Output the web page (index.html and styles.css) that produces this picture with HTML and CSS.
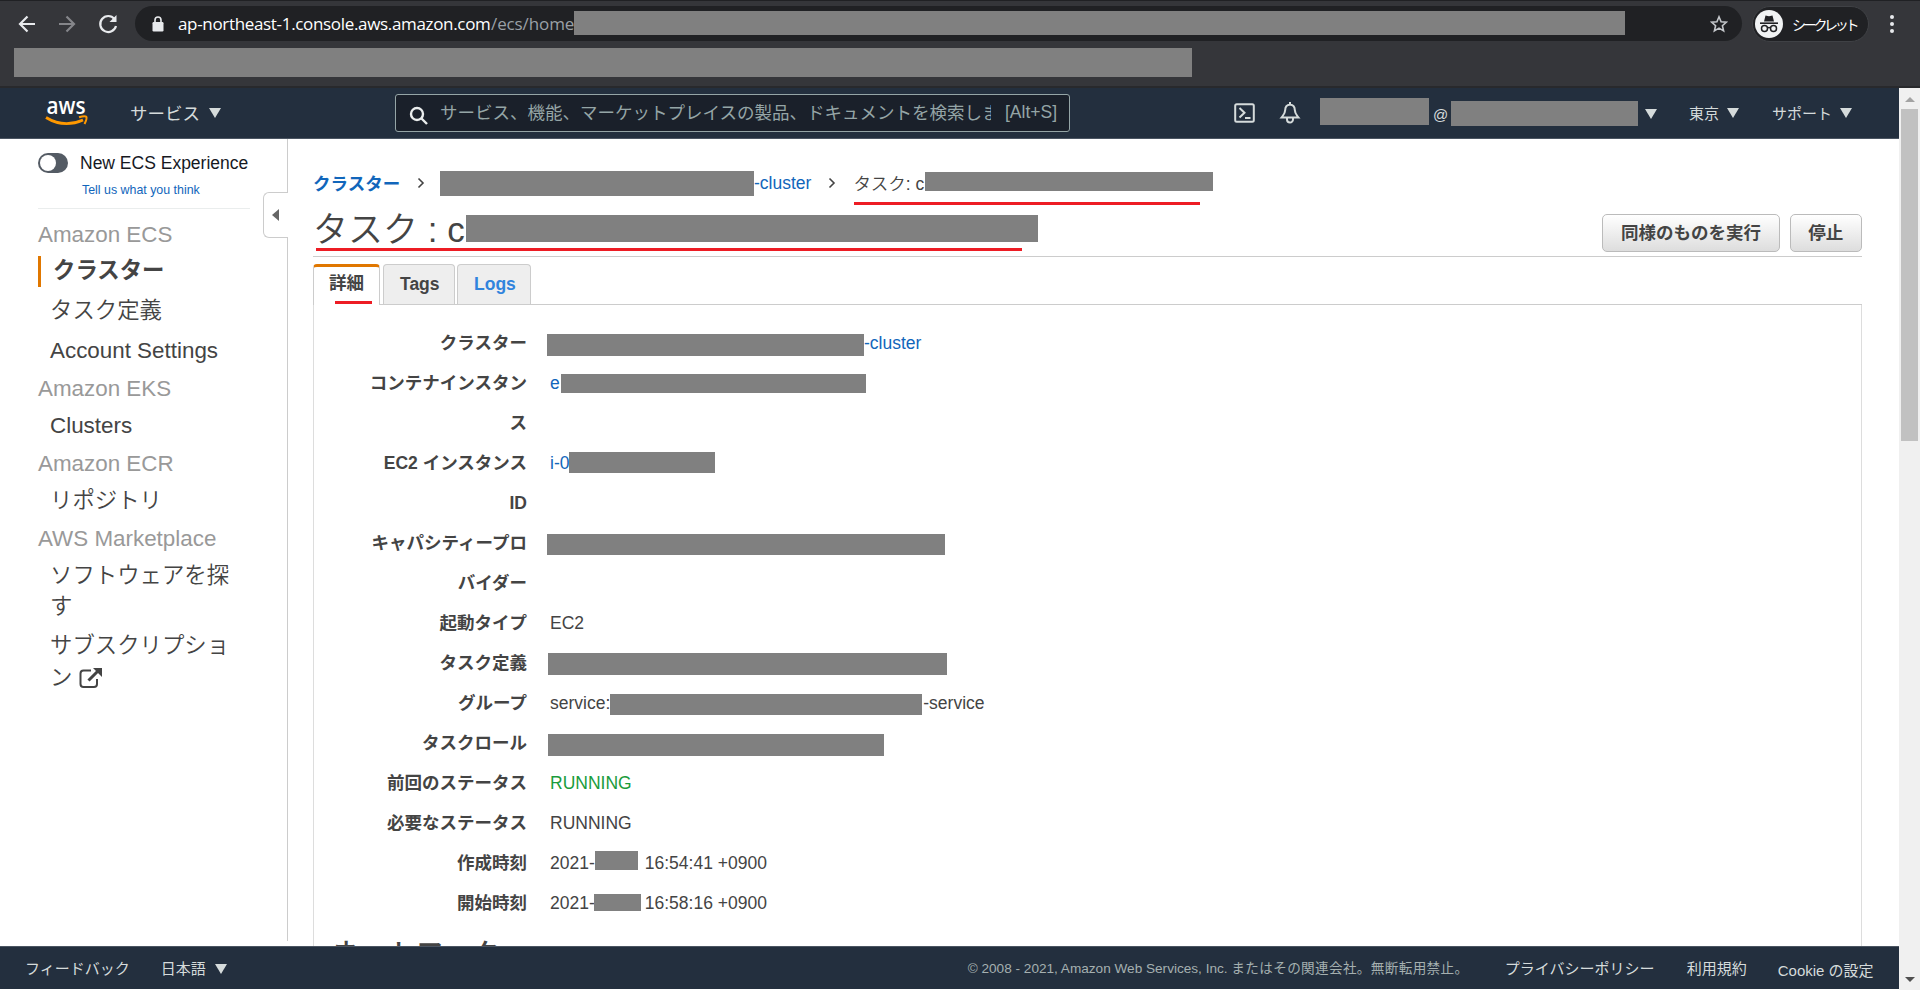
FILE: index.html
```
<!DOCTYPE html>
<html lang="ja">

<head>
    <meta charset="UTF-8">
    <meta name="viewport" content="width=device-width, initial-scale=1.0">
    <title>Amazon ECS</title>
    <link rel="stylesheet" href="styles.css">
</head>

<body>
    <!-- browser bar -->
    <div class="browser">
        <div class="toolbar">
            <svg class="nav-icon" width="18" height="20" viewBox="0 0 18 20"><path d="M17 10H2M9.500 2.500L2 10l7.500 7.500" /></svg>
            <svg class="nav-icon disabled" width="18" height="20" viewBox="0 0 18 20"><path d="M1 10h15M8.500 2.500L16 10l-7.500 7.500" /></svg>
            <svg class="nav-icon" width="20" height="22" viewBox="0 0 20 22"><path d="M16.500 6A8 8 0 1 0 18 13" /><path class="solid" d="M18.500 2v7h-7z" /></svg>
            <div class="omnibox">
                <svg class="lock" width="12" height="16" viewBox="0 0 12 16"><path d="M3 7V4a3 3 0 0 1 6 0v3" fill="none" stroke="#e8eaed" stroke-width="1.600" /><rect x="0.500" y="6" width="11" height="9.500" rx="1.200" fill="#e8eaed" /></svg>
                <span class="url">ap-northeast-1.console.aws.amazon.com</span><span class="url path">/ecs/home</span>
                <span class="mask mask-url"></span>
                <svg class="star" width="18" height="18" viewBox="0 0 18 18"><path d="M9 1.800l2.100 4.900 5.300.5-4 3.500 1.200 5.200L9 13.100l-4.600 2.800 1.200-5.200-4-3.500 5.300-.5z" /></svg>
            </div>
            <div class="incognito">
                <svg width="28" height="28" viewBox="0 0 28 28"><circle cx="14" cy="14" r="14" fill="#f1f3f4" /><path d="M10.500 5.500l3.500.7 3.500-.7 1.500 6H9z" fill="#202124" /><path d="M5 13.200h18" stroke="#202124" stroke-width="1.600" /><g fill="none" stroke="#202124" stroke-width="1.500"><circle cx="9.500" cy="18.500" r="3" /><circle cx="18.500" cy="18.500" r="3" /><path d="M12.500 18q1.500-1 3 0" /></g></svg>
                <span>シークレット</span>
            </div>
            <svg class="menu" width="6" height="20" viewBox="0 0 6 20"><circle cx="3" cy="3" r="2" /><circle cx="3" cy="10" r="2" /><circle cx="3" cy="17" r="2" /></svg>
        </div>
        <div class="bookmarks"><span class="mask mask-bookmarks"></span></div>
    </div>

    <div class="window">
        <div class="page">
            <!-- header -->
            <div class="header">
                <svg class="logo" width="44" height="32" viewBox="0 -2 44 32">
                    <text x="1.500" y="15" textLength="39" lengthAdjust="spacingAndGlyphs">aws</text>
                    <path d="M1 18.500q18 11 37 2.500" fill="none" stroke="#ff9900" stroke-width="2.800" />
                    <path d="M34 18.200q6-1.800 7.300-.4 1 1.800-1.800 7.200" fill="none" stroke="#ff9900" stroke-width="2" />
                </svg>
                <a class="services">サービス<i class="caret"></i></a>
                <div class="search">
                    <svg width="20" height="20" viewBox="0 0 20 20"><circle cx="8" cy="8" r="6" /><path d="M12.500 12.500l5.500 5.500" /></svg>
                    <span class="search-text">サービス、機能、マーケットプレイスの製品、ドキュメントを検索しま</span>
                    <span class="search-key">[Alt+S]</span>
                </div>
                <svg class="shell" width="22" height="20" viewBox="0 0 22 20"><rect x="1.200" y="1.200" width="18.600" height="17.600" rx="1.500" /><path d="M5.500 5l5 4.700-5 4.800M11 15h5.500" /></svg>
                <svg class="bell" width="22" height="22" viewBox="0 0 22 22"><path d="M11 2.500c-3.300.4-4.800 2.600-4.800 5.500 0 3.500-1.700 5-3.700 7.500h17c-2-2.500-3.700-4-3.700-7.500 0-2.900-1.500-5.100-4.800-5.500zM11 0v3M8 16v1.500a3 3 0 0 0 6 0V16" /></svg>
                <div class="account">
                    <span class="mask mask-user"></span><span class="at">@</span><span class="mask mask-account"></span><i class="caret"></i>
                </div>
                <a class="region">東京<i class="caret"></i></a>
                <a class="support">サポート<i class="caret"></i></a>
            </div>

            <div class="body">
                <!-- sidebar -->
                <div class="sidebar">
                    <div class="switch-row"><span class="switch"></span>New ECS Experience</div>
                    <a class="feedback">Tell us what you think</a>
                    <div class="menu-title first">Amazon ECS</div>
                    <a class="menu-item active">クラスター</a>
                    <a class="menu-item task">タスク定義</a>
                    <a class="menu-item">Account Settings</a>
                    <div class="menu-title">Amazon EKS</div>
                    <a class="menu-item">Clusters</a>
                    <div class="menu-title">Amazon ECR</div>
                    <a class="menu-item">リポジトリ</a>
                    <div class="menu-title">AWS Marketplace</div>
                    <a class="menu-item wrap">ソフトウェアを探す</a>
                    <a class="menu-item wrap last">サブスクリプション <svg width="24" height="22" viewBox="0 0 24 22"><path d="M12 3.500H4.500a3 3 0 0 0-3 3v10.500a3 3 0 0 0 3 3h10.500a3 3 0 0 0 3-3V12" fill="none" stroke="#444" stroke-width="2" /><path d="M9.500 13.500L19 4" stroke="#444" stroke-width="3" /><path d="M14 1h9v9z" fill="#444" /></svg></a>
                    <div class="collapse"><i></i></div>
                </div>

                <!-- content -->
                <div class="content">
                    <div class="breadcrumb">
                        <a class="crumb-root">クラスター</a>
                        <svg class="sep" width="8" height="12" viewBox="0 0 8 12"><path d="M1.500 1.500L6 6l-4.500 4.500" /></svg>
                        <span class="mask mask-crumb"></span><a>-cluster</a>
                        <svg class="sep sep-last" width="8" height="12" viewBox="0 0 8 12"><path d="M1.500 1.500L6 6l-4.500 4.500" /></svg>
                        <span class="crumb-task">タスク: c</span><span class="mask mask-task"></span>
                        <i class="redline red-crumb"></i>
                    </div>
                    <div class="title-row">
                        <h1>タスク : c</h1><span class="mask mask-title"></span>
                        <div class="buttons">
                            <button>同様のものを実行</button>
                            <button>停止</button>
                        </div>
                        <i class="redline red-title"></i>
                    </div>
                    <div class="tabs">
                        <a class="tab current">詳細<i class="redline red-tab"></i></a>
                        <a class="tab">Tags</a>
                        <a class="tab logs">Logs</a>
                    </div>
                    <div class="panel">
                        <dl>
                            <dt>クラスター</dt>
                            <dd><span class="mask m-cluster"></span><a>-cluster</a></dd>
                            <dt>コンテナインスタンス</dt>
                            <dd><a>e</a><span class="mask m-container"></span></dd>
                            <dt>EC2 インスタンス<br>ID</dt>
                            <dd><a>i-0</a><span class="mask m-instance"></span></dd>
                            <dt>キャパシティープロバイダー</dt>
                            <dd><span class="mask m-capacity"></span></dd>
                            <dt>起動タイプ</dt>
                            <dd>EC2</dd>
                            <dt>タスク定義</dt>
                            <dd><span class="mask m-taskdef"></span></dd>
                            <dt>グループ</dt>
                            <dd>service:<span class="mask m-group"></span>-service</dd>
                            <dt>タスクロール</dt>
                            <dd><span class="mask m-role"></span></dd>
                            <dt>前回のステータス</dt>
                            <dd class="running">RUNNING</dd>
                            <dt>必要なステータス</dt>
                            <dd>RUNNING</dd>
                            <dt>作成時刻</dt>
                            <dd>2021-<span class="mask m-created"></span>16:54:41 +0900</dd>
                            <dt>開始時刻</dt>
                            <dd>2021-<span class="mask m-started"></span>16:58:16 +0900</dd>
                        </dl>
                        <h2>ネットワーク</h2>
                    </div>
                </div>
            </div>

            <!-- footer -->
            <div class="footer">
                <a>フィードバック</a>
                <a class="lang">日本語<i class="caret"></i></a>
                <span class="copyright">© 2008 - 2021, Amazon Web Services, Inc. <span>またはその関連会社。無断転用禁止。</span></span>
                <a class="privacy">プライバシーポリシー</a>
                <a class="terms">利用規約</a>
                <a class="cookie">Cookie の設定</a>
            </div>
        </div>

        <div class="scrollbar">
            <i class="arrow up"></i>
            <div class="thumb"></div>
            <i class="arrow down"></i>
        </div>
    </div>
</body>

</html>
```
FILE: styles.css
```
* {
    box-sizing: border-box;
}

body {
    margin: 0;
    width: 1920px;
    height: 990px;
    overflow: hidden;
    background: #fff;
    color: #444;
    font-family: "Liberation Sans", "Noto Sans CJK JP", sans-serif;
    font-size: 17.5px;
}

a {
    text-decoration: none;
}

svg {
    display: block;
    flex: none;
}

.mask {
    display: block;
    flex: none;
    background: #808080;
}

.redline {
    position: absolute;
    height: 3px;
    background: #ed1c24;
}

.caret {
    display: inline-block;
    border: 6px solid transparent;
    border-top: 10px solid #d5dbdb;
    border-bottom: 0;
}

/* browser */

.browser {
    height: 88px;
    background: #35363a;
    border-top: 1px solid #202124;
    border-bottom: 2px solid #28292c;
}

.toolbar {
    display: flex;
    align-items: center;
    height: 45px;
    padding-left: 18px;
}

.nav-icon {
    margin-right: 22px;
    fill: none;
    stroke: #e8eaed;
    stroke-width: 2.2;
}

.nav-icon.disabled {
    stroke: #85868a;
}

.nav-icon .solid {
    fill: #e8eaed;
    stroke: none;
}

.nav-icon:nth-child(3) {
    margin-right: 17px;
}

.omnibox {
    display: flex;
    align-items: center;
    width: 1607px;
    height: 35px;
    padding-left: 17px;
    border-radius: 18px;
    background: #202124;
}

.lock {
    margin-right: 14px;
}

.url {
    width: 313px;
    font-family: "Open Sans", sans-serif;
    font-size: 17px;
    letter-spacing: -0.33px;
    color: #fff;
    white-space: nowrap;
}

.url.path {
    width: 83px;
    letter-spacing: -0.1px;
    color: #9aa0a6;
}

.mask-url {
    width: 1051px;
    height: 24px;
    margin-bottom: 1px;
}

.star {
    margin-left: 85px;
    fill: none;
    stroke: #c4c7cb;
    stroke-width: 1.6;
}

.incognito {
    display: flex;
    align-items: center;
    gap: 9px;
    width: 117px;
    height: 36px;
    margin-left: 10px;
    padding-left: 2px;
    border: 1px solid #3f4145;
    border-radius: 18px;
    background: #202124;
    color: #fff;
    font-size: 14px;
    white-space: nowrap;
}

.incognito span {
    width: 64px;
    letter-spacing: -3.3px;
}

.menu {
    margin-left: 20px;
    fill: #e8eaed;
}

.bookmarks {
    padding: 2px 14px 0;
}

.mask-bookmarks {
    width: 1178px;
    height: 29px;
}

/* window */

.window {
    display: flex;
    height: 902px;
}

.page {
    width: 1899px;
    display: flex;
    flex-direction: column;
}

.header {
    display: flex;
    align-items: center;
    flex: none;
    height: 51px;
    padding-left: 45px;
    border-bottom: 1px solid #4b5562;
    background: #232f3e;
    color: #d5dbdb;
    white-space: nowrap;
}

.logo {
    overflow: visible;
}

.logo text {
    font-family: "Open Sans", sans-serif;
    font-size: 24px;
    font-weight: 600;
    fill: #fff;
}

.services {
    display: flex;
    align-items: center;
    width: 306px;
    padding: 0 0 2px 41px;
}

.services .caret {
    margin: 2px 0 0 9px;
}

.search {
    display: flex;
    align-items: center;
    width: 675px;
    height: 38px;
    padding-left: 13px;
    border: 1px solid #95a5a6;
    border-radius: 3px;
    background: #1a202a;
    color: #95a5a6;
}

.search svg {
    margin-top: 5px;
    fill: none;
    stroke: #eaeded;
    stroke-width: 2.4;
}

.search-text {
    width: 551px;
    margin: 0 0 3px 11px;
    overflow: hidden;
}

.search-key {
    margin: 0 0 1px 14px;
    font-size: 17.5px;
}

.shell,
.bell {
    fill: none;
    stroke: #d5dbdb;
    stroke-width: 2;
}

.shell {
    margin-left: 164px;
}

.bell {
    margin-left: 23px;
}

.account {
    display: flex;
    margin: 0 0 2px 19px;
    height: 28px;
    width: 337px;
}

.mask-user {
    width: 109px;
    height: 27px;
}

.at {
    width: 22px;
    padding-left: 4px;
    font-size: 15px;
    line-height: 33px;
}

.mask-account {
    width: 187px;
    height: 25px;
    margin-top: 3px;
}

.account .caret {
    margin: 11px 0 0 7px;
}

.region,
.support {
    display: flex;
    align-items: center;
    width: 83px;
    margin: 0 0 2px 32px;
    font-size: 15px;
}

.region .caret,
.support .caret {
    margin: 2px 0 0 8px;
}

.support {
    margin-left: 0;
}

.body {
    display: flex;
    flex: none;
    height: 807px;
    overflow: hidden;
}

/* sidebar */

.sidebar {
    position: relative;
    width: 288px;
    height: 802px;
    padding: 14px 37px 0 38px;
    border-right: 1px solid #ccc;
}

.switch-row {
    display: flex;
    align-items: center;
    height: 20px;
    color: #16191f;
    white-space: nowrap;
    font-size: 17.5px;
}

.switch {
    width: 30px;
    height: 20px;
    margin-right: 12px;
    padding: 2px;
    border-radius: 10px;
    background: #545b64;
}

.switch::before {
    content: "";
    display: block;
    width: 16px;
    height: 16px;
    border-radius: 50%;
    background: #fff;
}

.feedback {
    display: block;
    height: 36px;
    padding-left: 44px;
    border-bottom: 1px solid #eaeded;
    font-size: 12.4px;
    line-height: 34px;
    color: #1166bb;
}

.menu-title,
.menu-item {
    display: block;
    font-size: 22.4px;
    line-height: 31px;
    white-space: nowrap;
}

.menu-title {
    height: 38px;
    padding-top: 1px;
    color: #999;
}

.menu-title.first {
    height: 47px;
    padding-top: 10px;
}

.menu-item {
    height: 37px;
    padding-left: 12px;
    color: #444;
    font-weight: 350;
}

.menu-item.active {
    height: 31px;
    margin-bottom: 8px;
    border-left: 3px solid #e07700;
    font-weight: bold;
    line-height: 29px;
}

.menu-item.task {
    height: 40px;
}

.menu-item.wrap {
    height: 70px;
    white-space: normal;
    word-break: break-all;
}

.menu-item.last {
    line-height: 32px;
}

.menu-item svg {
    display: inline-block;
    vertical-align: -4px;
}

.collapse {
    position: absolute;
    left: 263px;
    top: 53px;
    width: 25px;
    height: 46px;
    padding: 16px 0 0 8px;
    border: 1px solid #ccc;
    border-right: 0;
    border-radius: 6px 0 0 6px;
    background: #fff;
}

.collapse i {
    display: block;
    width: 0;
    border: 6px solid transparent;
    border-right: 7px solid #666;
    border-left: 0;
}

/* content */

.content {
    width: 1549px;
    margin-left: 25px;
}

.breadcrumb {
    position: relative;
    display: flex;
    align-items: center;
    height: 26px;
    margin-top: 31px;
    white-space: nowrap;
}

.content a {
    color: #1166bb;
}

.crumb-root {
    width: 104px;
    margin-bottom: 2px;
    font-weight: bold;
}

.sep {
    margin-right: 15px;
    fill: none;
    stroke: #444;
    stroke-width: 1.6;
}

.mask-crumb {
    width: 314px;
    height: 25px;
}

.sep-last {
    margin: 0 17px 0 17px;
}

.crumb-task {
    width: 72px;
    margin-bottom: 2px;
    font-weight: 350;
}

.mask-task {
    width: 288px;
    height: 19px;
    margin-bottom: 4px;
}

.red-crumb {
    left: 541px;
    top: 32px;
    width: 346px;
}

.title-row {
    position: relative;
    display: flex;
    height: 61px;
    border-bottom: 1px solid #ccc;
}

h1 {
    width: 153px;
    margin: 11px 0 0;
    font-size: 35px;
    line-height: 45px;
    font-weight: 350;
    white-space: nowrap;
}

.mask-title {
    width: 572px;
    height: 27px;
    margin-top: 19px;
}

.buttons {
    display: flex;
    gap: 10px;
    margin: 18px 0 0 auto;
}

button {
    height: 38px;
    padding: 0 17.7px;
    border: 1px solid #bbb;
    border-radius: 5px;
    background: linear-gradient(#fff, #ddd);
    color: #444;
    font-family: inherit;
    font-size: 17.5px;
    font-weight: bold;
    line-height: 30px;
    white-space: nowrap;
}

.red-title {
    left: 3px;
    top: 52px;
    width: 706px;
}

.tabs {
    display: flex;
    height: 41px;
    margin-top: 7px;
    border-bottom: 1px solid #ccc;
}

.content .tab {
    position: relative;
    width: 72px;
    height: 40px;
    margin-right: 2px;
    padding: 0 16px;
    border: 1px solid #ccc;
    border-bottom: 0;
    border-radius: 4px 4px 0 0;
    background: #eee;
    color: #444;
    font-weight: bold;
    line-height: 38px;
}

.content .tab.current {
    width: 67px;
    height: 41px;
    padding: 0 15px;
    margin-right: 3px;
    border-top: 3px solid #e07700;
    background: #fff;
    line-height: 33px;
    white-space: nowrap;
}

.content .tab.logs {
    width: 74px;
    color: #3184dd;
}

.red-tab {
    left: 21px;
    top: 34px;
    width: 37px;
}

.panel {
    height: 700px;
    padding-top: 18px;
    border: 1px solid #ddd;
    border-top: 0;
}

dl {
    display: grid;
    grid-template-columns: 213px 1fr;
    column-gap: 23px;
    margin: 0;
    line-height: 40px;
}

dt {
    padding-left: 50px;
    font-weight: bold;
    text-align: right;
    word-break: break-all;
}

dd {
    display: flex;
    margin: 0;
    white-space: nowrap;
}

.m-cluster {
    width: 317px;
    height: 22px;
    margin: 11px 0 0 -3px;
}

.m-container {
    width: 305px;
    height: 19px;
    margin: 11px 0 0 1px;
}

.m-instance {
    width: 146px;
    height: 21px;
    margin-top: 9px;
}

.m-capacity {
    width: 398px;
    height: 21px;
    margin: 11px 0 0 -3px;
}

.m-taskdef {
    width: 399px;
    height: 22px;
    margin: 10px 0 0 -2px;
}

.m-group {
    width: 312px;
    height: 21px;
    margin: 11px 1px 0 0;
}

.m-role {
    width: 336px;
    height: 22px;
    margin: 11px 0 0 -2px;
}

.running {
    color: #1a9c3c;
}

.m-created {
    width: 43px;
    height: 19px;
    margin: 8px 7px 0 0;
}

.m-started {
    width: 47px;
    height: 17px;
    margin: 11px 4px 0 -1px;
}

h2 {
    margin: 12px 0 0 18px;
    font-size: 28px;
    line-height: 40px;
    font-weight: 500;
}

/* footer */

.footer {
    display: flex;
    flex: none;
    height: 43px;
    padding-left: 25px;
    border-top: 1px solid #4b5562;
    background: #232f3e;
    color: #d5dbdb;
    font-size: 15px;
    line-height: 43px;
    white-space: nowrap;
}

.lang {
    margin-left: 31px;
    width: 807px;
}

.lang .caret {
    margin-left: 9px;
}

.footer .copyright {
    width: 537px;
    font-size: 13.6px;
    color: #a5b0b0;
}

.copyright span {
    letter-spacing: 0.35px;
}

.privacy {
    width: 182px;
}

.terms {
    width: 91px;
}

.cookie {
    padding-top: 2px;
}

/* scrollbar */

.scrollbar {
    display: flex;
    flex-direction: column;
    align-items: center;
    width: 21px;
    background: #f0f0f0;
}

.arrow {
    border: 5px solid transparent;
}

.arrow.up {
    margin-top: 9px;
    border-top: 0;
    border-bottom-color: #a3a3a3;
}

.thumb {
    width: 17px;
    height: 332px;
    margin-top: 7px;
    background: #c1c1c1;
}

.arrow.down {
    margin: auto 0 8px;
    border-bottom: 0;
    border-top-color: #505050;
}
```
